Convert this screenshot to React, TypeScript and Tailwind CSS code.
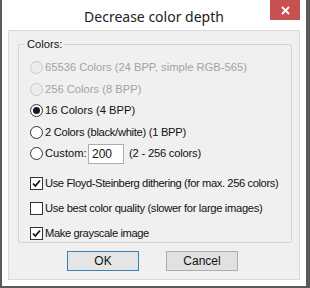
import React from "react";

const font = { fontFamily: '"Liberation Sans", Arial, sans-serif' };

function Radio({ checked, disabled }: { checked?: boolean; disabled?: boolean }) {
  return (
    <span
      className={`relative inline-flex w-[13px] h-[13px] rounded-full border items-center justify-center shrink-0 ${
        disabled ? "border-[#c8c8c8] bg-[#ececec]" : "border-[#333] bg-white"
      }`}
    >
      {checked && <span className="w-[7px] h-[7px] rounded-full bg-[#1a1a1a]" />}
    </span>
  );
}

function Check({ checked }: { checked?: boolean }) {
  return (
    <span className="inline-flex w-[13px] h-[13px] border border-[#333] bg-white items-center justify-center shrink-0">
      {checked && (
        <svg width="11" height="11" viewBox="0 0 11 11">
          <path d="M2 5.5 L4.3 8 L9 2.5" fill="none" stroke="#111" strokeWidth="1.8" />
        </svg>
      )}
    </span>
  );
}

export default function App() {
  return (
    <div className="w-[310px] h-[288px] bg-[#5a5a5a] pl-[2px] overflow-hidden" style={font}>
      <div className="w-[304px] h-[286px] bg-white flex flex-col">
        <div className="h-[30px] relative flex items-center justify-center shrink-0">
          <span
            className="text-[14px] text-[#222] mt-[2px]"
            style={{ fontFamily: '"Noto Sans", "Open Sans", sans-serif' }}
          >
            Decrease color depth
          </span>
          <div className="absolute left-[268px] top-0 w-[30px] h-[20px] bg-[#c75050] flex items-center justify-center">
            <svg width="9" height="9" viewBox="0 0 9 9">
              <path d="M1 1 L8 8 M8 1 L1 8" stroke="white" strokeWidth="1.8" />
            </svg>
          </div>
        </div>
        <div className="mx-[6px] h-[250px] bg-[#f0f0f0] border border-[#d9d9d9] flex flex-col text-[11.2px] text-[#111] whitespace-nowrap">
          <div className="relative mt-[13px] ml-[9px] mr-[7px] h-[199px] border border-[#d5d5d5] rounded-[2px]">
            <span className="absolute left-[6px] top-[-8px] bg-[#f0f0f0] px-[2px] leading-[14px]">Colors:</span>
            <div className="flex flex-col pl-[11px] pt-[12px]">
              <div className="flex items-center gap-[2px] h-[21.5px] text-[#a3a3a3]">
                <Radio disabled />
                <span>65536 Colors (24 BPP, simple RGB-565)</span>
              </div>
              <div className="flex items-center gap-[2px] h-[21.5px] text-[#a3a3a3]">
                <Radio disabled />
                <span>256 Colors (8 BPP)</span>
              </div>
              <div className="flex items-center gap-[2px] h-[21.5px]">
                <Radio checked />
                <span>16 Colors (4 BPP)</span>
              </div>
              <div className="flex items-center gap-[2px] h-[21.5px]">
                <Radio />
                <span className="tracking-[-0.3px]">2 Colors (black/white) (1 BPP)</span>
              </div>
              <div className="flex items-center gap-[2px] h-[21.5px]">
                <Radio />
                <span className="w-[41px]">Custom:</span>
                <div className="w-[36px] h-[20px] bg-white border border-[#abadb3] flex items-center pl-[3px] text-[12px]">
                  200
                </div>
                <span className="ml-[3px] tracking-[-0.2px]">(2 - 256 colors)</span>
              </div>
              <div className="flex items-center gap-[2px] h-[25px] mt-[6px]">
                <Check checked />
                <span className="tracking-[-0.4px]">Use Floyd-Steinberg dithering (for max. 256 colors)</span>
              </div>
              <div className="flex items-center gap-[2px] h-[25px]">
                <Check />
                <span className="tracking-[-0.33px]">Use best color quality (slower for large images)</span>
              </div>
              <div className="flex items-center gap-[2px] h-[25px]">
                <Check checked />
                <span className="tracking-[-0.4px]">Make grayscale image</span>
              </div>
            </div>
          </div>
          <div className="flex gap-[27px] ml-[58px] mt-[8px]">
            <div className="w-[72px] h-[20px] border border-[#3c7fb1] bg-[#e5e5e5] flex items-center justify-center text-[12px]">
              OK
            </div>
            <div className="w-[72px] h-[20px] border border-[#adadad] bg-[#e1e1e1] flex items-center justify-center text-[12px]">
              Cancel
            </div>
          </div>
        </div>
      </div>
    </div>
  );
}
